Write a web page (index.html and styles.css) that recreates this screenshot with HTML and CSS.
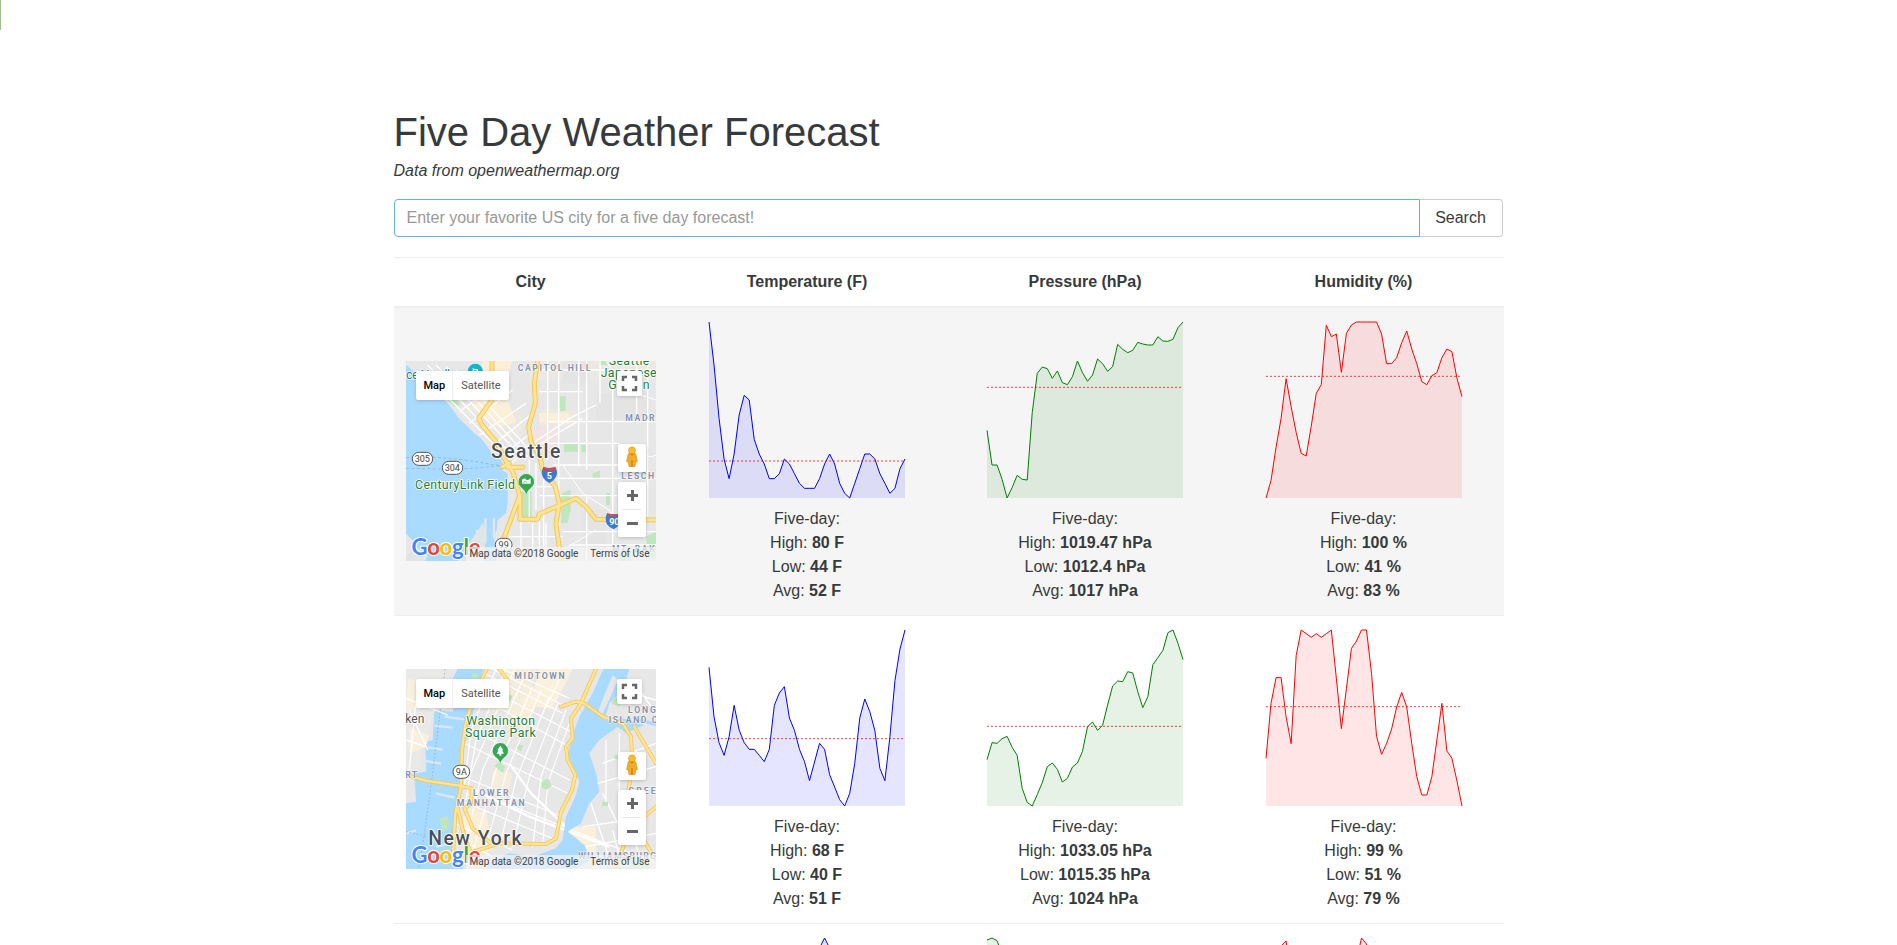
FILE: index.html
```html
<!DOCTYPE html>
<html lang="en">
<head>
<meta charset="utf-8">
<title>Five Day Weather Forecast</title>
<link rel="stylesheet" href="styles.css">
</head>
<body>
<div class="edge-marker"></div>
<svg class="defs" width="0" height="0" aria-hidden="true">
  <defs>
    <g id="pegman">
      <path d="M10.200 10 L8.600 17.500 L10.300 18.200 L11 22.600 H17 L17.700 18.200 L19.400 17.500 L17.800 10 Q17 8.600 14 8.600 Q11 8.600 10.200 10Z" fill="#f5ab25" stroke="#c98a1b" stroke-width=".6"/>
      <path d="M11.700 9 L14 11.600 L16.300 9Z" fill="#e0562b"/>
      <circle cx="14" cy="6.400" r="3.500" fill="#fbbc2c" stroke="#d2921d" stroke-width=".6"/>
      <path d="M14 16V22.600" stroke="#a86f12" stroke-width=".9"/>
    </g>
  </defs>
</svg>
<main class="container">
  <h1>Five Day Weather Forecast</h1>
  <p class="source"><i>Data from openweathermap.org</i></p>
  <form class="search">
    <input type="text" placeholder="Enter your favorite US city for a five day forecast!">
    <button type="button">Search</button>
  </form>

  <section class="table">
    <div class="row head"><div>City</div><div>Temperature (F)</div><div>Pressure (hPa)</div><div>Humidity (%)</div></div>

    <div class="row active">
      <div class="city">
        <div class="map">
          <svg class="canvas" viewBox="30 33 750 600">
            <rect x="30" y="33" width="750" height="600" fill="#e7e7e7"/>
            <path d="M400 33H780V90H400ZM430 180h110v50H430ZM290 195h90v65h-90ZM210 150h60v40h-60Z" fill="#ece9e2"/>
            <path d="M500 33h80v70h-80ZM600 130h160v80H600ZM560 480h70v120h-70Z" fill="#e4e4e4"/>
            <path d="M405 240l70-10 10 80-60 10Z" fill="#f3e3e3"/>
            <path d="M260 33h90l-30 80 40 100-50 20-80-60ZM430 190h90v30h-90Z" fill="#fbefd9"/>
            <path d="M492 138h17v45h-17ZM504 280h42v25h-42ZM556 285h14v20h-14ZM590 370l22-8v24h-22ZM630 430h12v35h-12ZM496 430l28-10v60l-10 40h-18ZM375 425h32v78h-32ZM750 560l30-15v80h-25ZM670 600h35v33h-35ZM610 33h25v12h-25ZM120 110l30 5 45 50-20 5Z" fill="#bfe6bd"/>
            <g fill="none" stroke="#fff" stroke-width="4">
              <path d="M455 33V330M488 33V540M548 33V350M572 33V360M572 440V633M612 33V160M650 90V633M722 33V200M755 33V500M380 60H780M430 125H560M455 215H780M440 280H670M470 345H670M470 385H780M430 437H670M500 545H780M520 585H780M340 560H500M410 520V633M430 500V633M375 500V633M450 520V633"/>
              <path d="M75 60L340 330M95 45L355 325M120 45L375 320M150 50L395 320M180 60L410 310M190 185L310 95M220 220L350 120M250 255L390 160M285 290L410 190M315 320L410 245M380 300L530 200L600 165M400 300L560 205M345 340L420 280M400 330V520M420 340V480M443 350V633M360 410H470"/>
              <path d="M630 33L690 120L780 150M720 300Q760 330 780 315M500 345L560 430L640 480L680 560M500 600L600 540" stroke-width="3"/>
            </g>
            <path d="M30 45L55 65 105 110 160 165 185 200 235 250 255 265 285 305 315 330 325 350 320 362 335 370 335 462 330 490 305 510 302 540 293 560 298 590 300 633H85L95 618 60 590 55 575 30 552Z" fill="#a9daff"/>
            <path d="M30 633V620L55 595 85 633ZM185 633l75-115 10 30-5 85Z" fill="#e2e4e6"/>
            <path d="M265 505h7v75h-7ZM290 505h7v60h-7ZM240 540h6v40h-6Z" fill="#dfe7ea"/>
            <path d="M30 323C110 318 150 324 205 330S290 347 320 346M30 355C120 356 190 363 320 346" fill="none" stroke="#8aa9dd" stroke-width="2" stroke-dasharray="9 7"/>
            <g fill="none" stroke-linejoin="round" stroke-linecap="round">
              <path d="M288 33V150L248 205 262 230 300 275 325 325 350 365 372 440 372 508H425L430 492 500 462 540 445 570 470 600 508 780 510M335 352H380M320 350l20-10M372 435L325 560 320 580M425 33L415 100 418 160 398 230 405 275 432 320 440 360 478 410 490 460 480 520 495 633" stroke="#f2c75c" stroke-width="15"/>
              <path d="M288 33V150L248 205 262 230 300 275 325 325 350 365 372 440 372 508H425L430 492 500 462 540 445 570 470 600 508 780 510M335 352H380M320 350l20-10M372 435L325 560 320 580M425 33L415 100 418 160 398 230 405 275 432 320 440 360 478 410 490 460 480 520 495 633" stroke="#ffe494" stroke-width="9"/>
            </g>
            <g class="area"><text x="365" y="62" textLength="218">CAPITOL HILL</text><text x="688" y="213" textLength="88">MADR</text><text x="676" y="387" textLength="98">LESCH</text><text x="648" y="607" textLength="128">MT. BAK</text></g>
            <g class="park"><text x="638" y="45" textLength="122">Seattle</text><text x="614" y="80" textLength="168">Japanese</text><text x="637" y="118" textLength="124">Garden</text><text x="57" y="418" textLength="300">CenturyLink Field</text><text class="teal" x="30" y="88" textLength="150">ce Needle</text></g>
            <circle cx="238" cy="64" r="23" fill="#12b5cb"/><path d="M232 55v16M232 59h12v12M232 71h6" stroke="#fff" stroke-width="4" fill="none"/>
            <text class="big" x="285" y="323" textLength="208">Seattle</text>
            <path d="M391 432C386 415 368 413 368 395a23 23 0 0 1 46 0C414 413 396 415 391 432Z" fill="#34a853"/><path d="M378 389q7-7 13 0 6 4 13-4v16h-26Z" fill="#fff"/><path d="M380 400q8-10 13-3" stroke="#34a853" stroke-width="2" fill="none"/>
            <g fill="#fff" stroke="#555" stroke-width="3"><rect x="49" y="307" width="61" height="39" rx="19"/><rect x="139" y="334" width="61" height="39" rx="19"/><rect x="298" y="565" width="50" height="39" rx="19"/></g>
            <g class="shield"><text x="79" y="336">305</text><text x="169" y="363">304</text><text x="323" y="593">99</text></g>
            <path d="M442 351q18 6 36 0 10 18 0 33-8 11-18 15-10-4-18-15-10-15 0-33Z" fill="#3e7acb"/><path d="M442 351q18 6 36 0v11h-36Z" fill="#d54b45"/>
            <path d="M633 490q22 6 40 0 8 18-2 33-8 11-18 15-12-4-20-15-8-15 0-33Z" fill="#3e7acb"/><path d="M633 490q22 6 40 0v9h-40Z" fill="#d54b45"/>
            <g class="shield light"><text x="460" y="387">5</text><text x="655" y="525">90</text></g>
          </svg>
          <div class="logo"><b>G</b><b>o</b><b>o</b><b>g</b><b>l</b><b>e</b></div>
          <div class="legal"><span>Map data ©2018 Google</span><span>Terms of Use</span></div>
          <div class="types"><span class="on">Map</span><span>Satellite</span></div>
          <div class="ctl full"><svg viewBox="0 0 25 25"><path d="M6 10V6H10M15 6H19V10M19 15V19H15M10 19H6V15"/></svg></div>
          <div class="ctl peg"><svg viewBox="0 0 28 28"><use href="#pegman"/></svg></div>
          <div class="ctl zoom"><svg viewBox="0 0 28 55"><path d="M9 13.500H20M14.500 8V19M9 41.500H20"/><path class="rule" d="M4 27.500H23"/></svg></div>
        </div>
      </div>
      <div class="cell"><svg class="spark blue" data-top="66" data-avg="483" data-y="66,195,355,477,536,462,345,286,300,418,462,492,536,536,521,477,492,521,550,565,565,565,536,492,462,492,550,580,594,550,506,462,462,477,521,550,580,565,506,477"></svg>
        <p>Five-day:</p><p>High: <b>80 F</b></p><p>Low: <b>44 F</b></p><p>Avg: <b>52 F</b></p></div>
      <div class="cell"><svg class="spark green" data-top="66" data-avg="262" data-y="391,495,495,538,594,563,526,538,540,338,220,201,206,235,213,248,254,230,183,218,244,225,177,191,214,200,133,148,158,151,127,132,135,135,110,123,124,118,83,66"></svg>
        <p>Five-day:</p><p>High: <b>1019.47 hPa</b></p><p>Low: <b>1012.4 hPa</b></p><p>Avg: <b>1017 hPa</b></p></div>
      <div class="cell"><svg class="spark red" data-top="66" data-avg="229" data-y="594,541,442,355,236,320,397,460,468,379,280,254,76,110,102,217,100,75,66,66,66,66,66,102,191,191,173,128,93,147,191,245,254,227,218,173,147,155,235,290"></svg>
        <p>Five-day:</p><p>High: <b>100 %</b></p><p>Low: <b>41 %</b></p><p>Avg: <b>83 %</b></p></div>
    </div>

    <div class="row">
      <div class="city">
        <div class="map">
          <svg class="canvas" viewBox="30 27 750 600">
            <rect x="30" y="27" width="750" height="600" fill="#e7e7e7"/>
            <path d="M320 27L300 110 270 160 330 150 380 200 420 27ZM290 330l60 10-20 90-50 10ZM215 400l40 20-10 80-30 10Z" fill="#f5eddc"/>
            <path d="M480 27L420 140 370 240 380 120ZM200 470l70-20 20 120-60 20Z" fill="#fbefd9"/>
            <path d="M430 27h100l-60 120-70-10ZM70 27h80v120H70ZM520 500h80v80h-80Z" fill="#fbf0dc"/>
            <g fill="none" stroke="#fff" stroke-width="3.500">
              <path d="M300 27L225 210 205 380M330 27L240 240 210 420M355 27L225 340M380 60L260 330 215 520M410 80L300 330 235 560M435 90L330 340 270 560M460 110L360 360 310 560M485 130L400 350 350 560M510 150L435 350 410 560M520 190L455 370 440 555M490 60L440 160"/>
              <path d="M230 100L520 260M245 70L525 215M265 40L500 160M210 200L520 360M205 250L515 400M200 350L500 470M225 390L780 610M190 420L480 540M175 490L350 570M170 525L290 590M290 27L510 140M320 27L520 115"/>
              <path d="M225 385L400 470 640 560M340 310L405 400 530 520" stroke-width="7"/>
            </g>
            <path d="M262 27L240 110 225 190 205 260 195 380 180 440 172 520 165 595 205 627H30V430L60 425 55 340 90 335 88 245 110 240 115 150 170 155 178 110 168 60 185 27Z" fill="#a9daff"/>
            <path d="M30 27H150L165 75 145 135 110 160 95 230 75 250 70 325 35 345 30 350Z" fill="#e9e9e7"/>
            <path d="M35 55l35 10-10 80-30 10ZM40 205l60 20-10 35-50 20Z" fill="#f9efde"/>
            <path d="M30 115L155 165M40 150L95 270M60 120L40 330M30 240L90 260" stroke="#fff" stroke-width="4" fill="none"/>
            <path d="M145 170l60 8M115 197l55 6M95 262l45 7M75 300l60 11M120 400l55 13M30 520l30-8M120 560l45-10" stroke="#dbe8ee" stroke-width="7"/>
            <path d="M622 27L590 100 550 170 530 225 515 285 535 330 550 365 540 405 510 470 500 540 480 565 410 590 340 580 290 600 270 627H540L585 600 565 555 535 530 515 515 555 490 580 430 610 395 600 340 580 280 610 240 665 200 690 220 745 195 680 175 625 180 640 130 680 90 700 27Z" fill="#a9daff"/>
            <path d="M650 45L625 105 608 150 612 175 635 130 665 60Z" fill="#e6e6e6"/>
            <path d="M735 175l45 14v10l-55-15Z" fill="#a9daff"/>
            <g stroke="#fff" stroke-width="4" fill="none"><path d="M710 60L780 160M670 90L780 120M620 310L780 250M605 370L780 320M630 240V430M670 220V520M585 430L650 627M560 500L700 480L740 627M620 400L690 540M570 560L780 520M610 580L600 627M650 510L680 627"/></g>
            <path d="M295 318l13-12 20 15-8 18ZM362 264l8-12 12 7-8 15ZM440 362l18-6 9 22-17 12-14-10ZM330 100l20 8-8 18-20-8ZM230 38l17 5-6 17-16-5ZM130 476l25-10 5 35-20 15ZM618 425h18v13h-18ZM655 285h14v12h-14ZM630 620h80v7h-80ZM700 600l60 15v12h-50ZM655 110l25 10-10 20-25-10Z" fill="#bfe6bd"/>
            <path d="M147 27Q120 270 95 450T65 627M30 515l65 15" fill="none" stroke="#8b9fb8" stroke-width="2" stroke-dasharray="5 6"/>
            <g fill="none" stroke-linejoin="round" stroke-linecap="round">
              <path d="M272 27L235 105 208 195 198 270 195 380 178 460 170 600M30 345L90 362 195 378 228 385 225 430 205 445 230 505 285 550M185 445L205 530 245 627M600 27L570 95 555 130 525 175 530 235 510 260 515 300 538 345 528 390 495 455 480 535 450 552 310 550 200 585 170 605M495 140L540 125 565 130 620 170 680 190 705 230 710 320 690 430 730 520 780 600M715 200L780 310M660 620L700 510 780 440M310 27L335 60" stroke="#f2c75c" stroke-width="12"/>
              <path d="M272 27L235 105 208 195 198 270 195 380 178 460 170 600M30 345L90 362 195 378 228 385 225 430 205 445 230 505 285 550M185 445L205 530 245 627M600 27L570 95 555 130 525 175 530 235 510 260 515 300 538 345 528 390 495 455 480 535 450 552 310 550 200 585 170 605M495 140L540 125 565 130 620 170 680 190 705 230 710 320 690 430 730 520 780 600M715 200L780 310M660 620L700 510 780 440M310 27L335 60" stroke="#ffe494" stroke-width="7"/>
            </g>
            <g class="area"><text x="355" y="56" textLength="151">MIDTOWN</text><text x="696" y="158" textLength="84">LONG</text><text x="638" y="188" textLength="146">ISLAND C</text><text x="231" y="409" textLength="107">LOWER</text><text x="182" y="437" textLength="204">MANHATTAN</text><text x="28" y="355" textLength="35">RT</text><text x="697" y="403" textLength="82">GREE</text><text x="547" y="596" textLength="233">WILLIAMSBURG</text></g>
            <text class="town" x="28" y="188">ken</text>
            <g class="park"><text x="211" y="194" textLength="206">Washington</text><text x="207" y="232" textLength="212">Square Park</text></g>
            <path d="M313 309C308 292 290 290 290 272a23 23 0 0 1 46 0C336 290 318 292 313 309Z" fill="#34a853"/><path d="M313 257l9 14h-4l6 10h-8v6h-6v-6h-8l6-10h-4Z" fill="#fff"/>
            <rect x="171" y="316" width="50" height="39" rx="19" fill="#fff" stroke="#555" stroke-width="3"/><text class="sh" x="196" y="345">9A</text>
            <text class="big" x="97" y="554" textLength="280">New York</text>
          </svg>
          <div class="logo"><b>G</b><b>o</b><b>o</b><b>g</b><b>l</b><b>e</b></div>
          <div class="legal"><span>Map data ©2018 Google</span><span>Terms of Use</span></div>
          <div class="types"><span class="on">Map</span><span>Satellite</span></div>
          <div class="ctl full"><svg viewBox="0 0 25 25"><path d="M6 10V6H10M15 6H19V10M19 15V19H15M10 19H6V15"/></svg></div>
          <div class="ctl peg"><svg viewBox="0 0 28 28"><use href="#pegman"/></svg></div>
          <div class="ctl zoom"><svg viewBox="0 0 28 55"><path d="M9 13.500H20M14.500 8V19M9 41.500H20"/><path class="rule" d="M4 27.500H23"/></svg></div>
        </div>
      </div>
      <div class="cell"><svg class="spark blue" data-top="60" data-avg="386" data-y="172,320,398,436,380,286,360,398,418,418,436,455,418,286,249,230,324,361,418,455,512,456,400,418,494,531,569,588,550,460,324,267,305,362,475,512,380,212,117,60"></svg>
        <p>Five-day:</p><p>High: <b>68 F</b></p><p>Low: <b>40 F</b></p><p>Avg: <b>51 F</b></p></div>
      <div class="cell"><svg class="spark green" data-top="60" data-avg="349" data-y="449,398,400,386,379,412,436,535,577,588,554,518,470,459,478,516,505,471,459,424,350,336,361,346,285,228,213,215,185,189,245,293,260,164,143,121,68,60,100,149"></svg>
        <p>Five-day:</p><p>High: <b>1033.05 hPa</b></p><p>Low: <b>1015.35 hPa</b></p><p>Avg: <b>1024 hPa</b></p></div>
      <div class="cell"><svg class="spark red" data-top="60" data-avg="290" data-y="445,280,203,203,320,401,137,60,71,82,71,82,71,60,205,356,236,115,93,60,60,190,379,433,400,357,291,247,291,400,500,555,555,500,390,280,423,445,513,588"></svg>
        <p>Five-day:</p><p>High: <b>99 %</b></p><p>Low: <b>51 %</b></p><p>Avg: <b>79 %</b></p></div>
    </div>

    <div class="row">
      <div class="city"></div>
      <div class="cell"><svg class="spark blue" data-top="0" data-avg="300" data-y="300,340,380,400,380,340,300,250,200,240,300,380,400,360,300,240,200,180,200,220,200,120,30,0,30,100,200,300,380,420,440,400,360,300,260,300,380,450,528,500"></svg></div>
      <div class="cell"><svg class="spark green" data-top="0" data-avg="300" data-y="6,0,8,50,100,140,180,200,220,240,260,280,300,320,340,360,380,400,420,440,450,460,470,480,490,500,510,528,500,480,460,440,430,420,410,400,390,380,370,360"></svg></div>
      <div class="cell"><svg class="spark red" data-top="0" data-avg="300" data-y="300,200,100,24,9,120,250,350,400,420,440,400,380,360,300,250,200,140,70,0,18,100,200,300,350,380,400,420,440,460,480,500,528,500,460,420,400,380,350,300"></svg></div>
    </div>
  </section>
</main>
<script src="sparklines.js"></script>
</body>
</html>
```

FILE: styles.css
```css
* { box-sizing: border-box; }
body {
  margin: 0;
  height: 945px;
  overflow: hidden;
  background: #fff;
  color: #373a3c;
  font: 16px/24px "Liberation Sans", Arial, sans-serif;
}
p { margin: 0; }
.defs { position: absolute; }
.edge-marker { position: absolute; left: 0; top: 0; width: 1px; height: 30px; background: #9fc184; }

.container { width: 1140px; height: 945px; margin: 0 auto; padding: 110px 15px 0; overflow: hidden; }
h1 { margin: 0; font-size: 40px; font-weight: 400; line-height: 44px; }
.source { padding-top: 5px; }

.search { display: flex; width: 1109px; margin: 16px 0 20px; height: 38px; }
.search input {
  flex: 1;
  padding: 0 12px;
  border: 1px solid #66afe9;
  border-radius: 4px 0 0 4px;
  background: #fff;
  font: inherit;
  outline: 0;
}
.search input::placeholder { color: #999; opacity: 1; }
.search button {
  width: 83px;
  padding: 0;
  border: 1px solid #ccc;
  border-left: 0;
  border-radius: 0 4px 4px 0;
  background: #fff;
  color: #373a3c;
  font: inherit;
}

.row {
  display: grid;
  grid-template-columns: 274px 279px 277px 280px;
  height: 308px;
  border-top: 1px solid #eceeef;
  text-align: center;
}
.row.head { height: 51px; padding-top: 12px; border-bottom: 2px solid #eceeef; font-weight: 700; }
.row.active { height: 307px; background: #f5f5f5; border-top: 0; }
.city { display: flex; justify-content: center; padding-top: 53px; }
.cell { padding-top: 12px; }

.spark { display: block; width: 200px; height: 180px; margin: 0 auto 7px; overflow: visible; fill: none; }
.spark .area-fill { fill-opacity: .1; stroke: none; }
.spark .mean { stroke: red; stroke-opacity: .75; stroke-dasharray: 2 2; }
.blue .line { stroke: blue; }
.blue .area-fill { fill: blue; }
.green .line { stroke: green; }
.green .area-fill { fill: green; }
.red .line { stroke: red; }
.red .area-fill { fill: red; }

.map {
  position: relative;
  width: 250px;
  height: 200px;
  overflow: hidden;
  font-family: Roboto, sans-serif;
  text-align: left;
}
.canvas { display: block; width: 250px; height: 200px; }
.canvas text { paint-order: stroke; stroke: #fff; stroke-width: 5px; stroke-linejoin: round; }
.canvas .area text { font-size: 26px; font-weight: 700; fill: #8492ae; stroke-width: 3px; }
.park text { font-size: 37px; fill: #1f7f33; }
.park .teal { fill: #128296; }
.canvas .big { font-size: 58px; font-weight: 500; fill: #484f58; }
.canvas .town { font-size: 36px; fill: #555; }
.canvas .shield text, .canvas .sh { font-size: 27px; fill: #444; stroke: none; text-anchor: middle; }
.canvas .shield.light text { fill: #fff; font-weight: 700; }

.logo { position: absolute; left: 6px; bottom: 2px; font: 22px/24px Lato, sans-serif; letter-spacing: -.2px; -webkit-text-stroke: 2px #fff; paint-order: stroke fill; }
.logo b { font-weight: 700; color: #4285f4; }
.logo b:nth-child(2), .logo b:nth-child(6) { color: #ea4335; }
.logo b:nth-child(3) { color: #fbbc05; }
.logo b:nth-child(5) { color: #34a853; }
.legal {
  position: absolute;
  right: 0;
  bottom: 0;
  width: 190px;
  height: 14px;
  padding: 0 6px 0 4px;
  display: flex;
  justify-content: space-between;
  background: rgba(245, 245, 245, .7);
  color: #444;
  font-size: 10px;
  line-height: 14px;
  white-space: nowrap;
}
.types, .ctl { position: absolute; background: #fff; border-radius: 2px; box-shadow: 0 1px 4px -1px rgba(0, 0, 0, .3); }
.types { left: 10px; top: 10px; display: flex; height: 29px; font-size: 11px; line-height: 29px; color: #565656; }
.types span { padding: 0 8px; }
.types .on { padding-right: 7px; color: #000; font-weight: 500; border-right: 1px solid #eee; }
.ctl svg { display: block; width: 100%; height: 100%; fill: none; stroke: #666; stroke-width: 2.500px; }
.ctl .rule { stroke: #e6e6e6; stroke-width: 1px; }
.full { right: 14px; top: 10px; width: 25px; height: 25px; }
.peg { right: 10px; top: 83px; width: 28px; height: 28px; }
.peg svg { stroke: none; }
.zoom { right: 10px; top: 121px; width: 28px; height: 55px; }
.zoom svg { stroke-width: 3px; }
```

FILE: sparklines.js
```js
// Each series lists sample heights in thirds of a pixel, measured down from data-top.
var NS = 'http://www.w3.org/2000/svg';
document.querySelectorAll('.spark').forEach(function (svg) {
  var top = +svg.dataset.top;
  var y = function (v) { return (2 + (v - top) / 3).toFixed(2); };
  var values = svg.dataset.y.split(',');
  var points = values.map(function (v, i) {
    return (2 + i * 196 / (values.length - 1)).toFixed(2) + ',' + y(+v);
  }).join(' ');
  function add(cls, pts) {
    var el = document.createElementNS(NS, 'polyline');
    el.setAttribute('class', cls);
    el.setAttribute('points', pts);
    svg.appendChild(el);
  }
  svg.setAttribute('viewBox', '0 0 200 180');
  add('area-fill', points + ' 198,178 2,178');
  add('line', points);
  add('mean', '2,' + y(+svg.dataset.avg) + ' 198,' + y(+svg.dataset.avg));
});
```
